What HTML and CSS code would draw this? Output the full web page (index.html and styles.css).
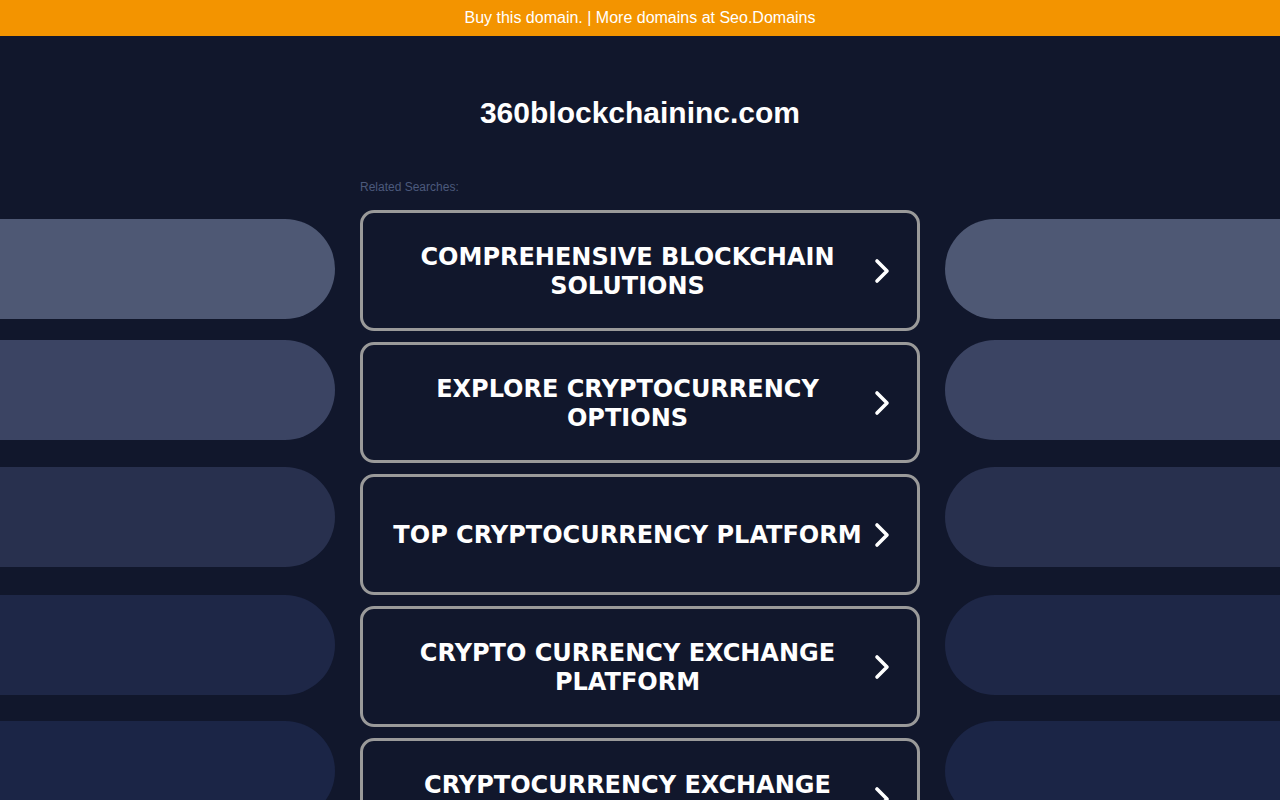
FILE: index.html
```html
<!DOCTYPE html>
<html lang="en">
<head>
<meta charset="utf-8">
<title>360blockchaininc.com</title>
<link rel="stylesheet" href="styles.css">
</head>
<body>
<div class="topbar"><a href="#">Buy this domain.</a> | <a href="#">More domains at Seo.Domains</a></div>
<h1 class="title">360blockchaininc.com</h1>
<div class="layout">
  <div class="side side-left">
    <div class="pill p1"></div>
    <div class="pill p2"></div>
    <div class="pill p3"></div>
    <div class="pill p4"></div>
    <div class="pill p5"></div>
  </div>
  <div class="center">
    <div class="related">Related Searches:</div>
    <div class="cards">
      <a class="card" href="#"><span class="card-text">COMPREHENSIVE BLOCKCHAIN SOLUTIONS</span><svg class="chev" viewBox="0 0 16 26"><polyline points="3,3 13,13 3,23"/></svg></a>
      <a class="card" href="#"><span class="card-text">EXPLORE CRYPTOCURRENCY OPTIONS</span><svg class="chev" viewBox="0 0 16 26"><polyline points="3,3 13,13 3,23"/></svg></a>
      <a class="card" href="#"><span class="card-text">TOP CRYPTOCURRENCY PLATFORM</span><svg class="chev" viewBox="0 0 16 26"><polyline points="3,3 13,13 3,23"/></svg></a>
      <a class="card" href="#"><span class="card-text">CRYPTO CURRENCY EXCHANGE PLATFORM</span><svg class="chev" viewBox="0 0 16 26"><polyline points="3,3 13,13 3,23"/></svg></a>
      <a class="card" href="#"><span class="card-text">CRYPTOCURRENCY EXCHANGE PLATFORMS</span><svg class="chev" viewBox="0 0 16 26"><polyline points="3,3 13,13 3,23"/></svg></a>
    </div>
  </div>
  <div class="side side-right">
    <div class="pill p1"></div>
    <div class="pill p2"></div>
    <div class="pill p3"></div>
    <div class="pill p4"></div>
    <div class="pill p5"></div>
  </div>
</div>
</body>
</html>
```
FILE: styles.css
```css
html, body {
  margin: 0;
  padding: 0;
  height: 800px;
  overflow: hidden;
}
body {
  background: #11172c;
  font-family: "Liberation Sans", Arial, sans-serif;
  color: #fff;
}
.topbar {
  height: 36px;
  background: #f39400;
  color: #fff;
  font-size: 16px;
  line-height: 35px;
  text-align: center;
}
.topbar a {
  color: #fff;
  text-decoration: none;
}
.title {
  margin: 0;
  padding-top: 60px;
  font-size: 30px;
  line-height: 34px;
  font-weight: bold;
  text-align: center;
  color: #fff;
}
.layout {
  display: grid;
  grid-template-columns: 335px 560px 335px;
  column-gap: 25px;
  margin-top: 50px;
}
.related {
  font-size: 12px;
  line-height: 14px;
  color: #4c5a7c;
  margin-bottom: 16px;
}
.cards {
  display: flex;
  flex-direction: column;
  gap: 11px;
}
.card {
  box-sizing: border-box;
  height: 121px;
  border: 3px solid #9a9a9a;
  border-radius: 14px;
  display: flex;
  align-items: center;
  padding: 0 27px 0 28px;
  text-decoration: none;
  color: #fff;
}
.card-text {
  flex: 1;
  text-align: center;
  font-family: "DejaVu Sans", Verdana, sans-serif;
  font-weight: bold;
  font-size: 24px;
  line-height: 29px;
  padding: 2px 10px 0 0;
}
.chev {
  width: 16px;
  height: 26px;
  flex: none;
}
.chev polyline {
  fill: none;
  stroke: #fff;
  stroke-width: 3.6;
  stroke-linecap: round;
  stroke-linejoin: round;
}
.side {
  display: flex;
  flex-direction: column;
}
.pill {
  height: 100px;
  flex: none;
}
.side-left .pill {
  border-radius: 0 50px 50px 0;
}
.side-right .pill {
  border-radius: 50px 0 0 50px;
}
.p1 { margin-top: 39px; background: #4e5874; }
.p2 { margin-top: 21px; background: #3b4463; }
.p3 { margin-top: 27px; background: #28304e; }
.p4 { margin-top: 28px; background: #1e2747; }
.p5 { margin-top: 26px; background: #1b2546; }
```
